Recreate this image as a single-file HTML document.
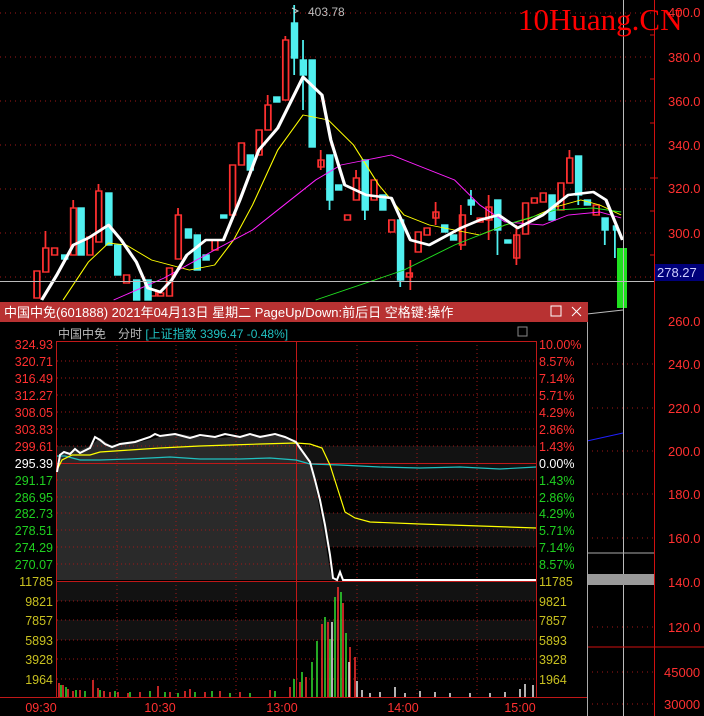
<!DOCTYPE html><html><head><meta charset="utf-8"><style>
body{margin:0;background:#000;width:704px;height:716px;overflow:hidden;font-family:"Liberation Sans","Noto Sans CJK SC",sans-serif}
svg{position:absolute;left:0;top:0}
</style></head><body>
<svg width="704" height="716" xmlns="http://www.w3.org/2000/svg" font-family="Liberation Sans, Noto Sans CJK SC, sans-serif">
<g stroke="#a01818" stroke-dasharray="1 4" stroke-width="1">
<line x1="0" y1="13" x2="654" y2="13"/><line x1="0" y1="57" x2="654" y2="57"/><line x1="0" y1="101" x2="654" y2="101"/><line x1="0" y1="145" x2="654" y2="145"/><line x1="0" y1="189" x2="654" y2="189"/><line x1="0" y1="233" x2="654" y2="233"/><line x1="0" y1="277" x2="654" y2="277"/>
<line x1="587" y1="364" x2="654" y2="364"/><line x1="587" y1="408" x2="654" y2="408"/><line x1="587" y1="451" x2="654" y2="451"/><line x1="587" y1="494" x2="654" y2="494"/><line x1="587" y1="538" x2="654" y2="538"/><line x1="587" y1="627" x2="654" y2="627"/><line x1="587" y1="672" x2="654" y2="672"/><line x1="587" y1="704" x2="654" y2="704"/>
</g>
<line x1="654.5" y1="0" x2="654.5" y2="716" stroke="#d01010"/>
<g stroke="#d01010"><line x1="650" y1="35" x2="654" y2="35"/><line x1="650" y1="79" x2="654" y2="79"/><line x1="650" y1="123" x2="654" y2="123"/><line x1="650" y1="178" x2="658" y2="178"/><line x1="650" y1="211" x2="654" y2="211"/><line x1="650" y1="255" x2="654" y2="255"/></g>
<g transform="scale(1.2626,1)">
<g fill="#ff3030" stroke="#ff3030" stroke-width="1.4">
<rect x="27" y="271" width="4.5" height="27" fill="#000"/><rect x="34" y="248" width="4.5" height="24" fill="#000"/><rect x="41" y="248" width="4.5" height="7" fill="#000"/><rect x="56" y="208" width="4.5" height="47" fill="#000"/><rect x="69" y="237" width="4.5" height="18" fill="#000"/><rect x="76" y="191" width="4.5" height="51" fill="#000"/><rect x="98" y="275" width="4.5" height="8" fill="#000"/><rect x="119" y="290" width="4.5" height="6" fill="#000"/><rect x="125" y="293" width="4.5" height="3" fill="#000"/><rect x="132" y="268" width="4.5" height="28" fill="#000"/><rect x="139" y="215" width="4.5" height="44" fill="#000"/><rect x="168" y="240" width="4.5" height="10" fill="#000"/><rect x="182" y="165" width="4.5" height="50" fill="#000"/><rect x="189" y="143" width="4.5" height="22" fill="#000"/><rect x="203" y="130" width="4.5" height="25" fill="#000"/><rect x="210" y="105" width="4.5" height="25" fill="#000"/><rect x="224" y="40" width="4.5" height="60" fill="#000"/><rect x="252" y="160" width="4.5" height="7" fill="#000"/><rect x="273" y="215" width="4.5" height="5" fill="#000"/><rect x="280" y="178" width="4.5" height="22" fill="#000"/><rect x="294" y="180" width="4.5" height="20" fill="#000"/><rect x="308" y="220" width="4.5" height="12" fill="#000"/><rect x="322" y="273" width="4.5" height="4" fill="#000"/><rect x="329" y="232" width="4.5" height="20" fill="#000"/><rect x="336" y="228" width="4.5" height="7" fill="#000"/><rect x="343" y="212" width="4.5" height="6" fill="#000"/><rect x="364" y="215" width="4.5" height="30" fill="#000"/><rect x="378" y="218" width="4.5" height="4" fill="#000"/><rect x="385" y="207" width="4.5" height="13" fill="#000"/><rect x="407" y="235" width="4.5" height="23" fill="#000"/><rect x="414" y="203" width="4.5" height="31" fill="#000"/><rect x="421" y="198" width="4.5" height="5" fill="#000"/><rect x="428" y="193" width="4.5" height="9" fill="#000"/><rect x="442" y="183" width="4.5" height="27" fill="#000"/><rect x="449" y="158" width="4.5" height="25" fill="#000"/><rect x="470" y="205" width="4.5" height="10" fill="#000"/>
<path d="M36 231V248M58 200V208M78 184V191M141 208V215M212 95V105M226 36V40M254 150V170M282 170V178M345 202V225M365 205V250M387 195V240M409 225V265M451 150V158M325 260V290" fill="none"/>
</g>
<g fill="#50f0f0" stroke="#50f0f0" stroke-width="1.4">
<rect x="49" y="255" width="4.5" height="4"/><rect x="62" y="208" width="4.5" height="47"/><rect x="84" y="193" width="4.5" height="52"/><rect x="91" y="245" width="4.5" height="30"/><rect x="106" y="280" width="4.5" height="20"/><rect x="115" y="280" width="4.5" height="20"/><rect x="147" y="229" width="4.5" height="9"/><rect x="154" y="235" width="4.5" height="35"/><rect x="161" y="255" width="4.5" height="5"/><rect x="175" y="215" width="4.5" height="3"/><rect x="196" y="155" width="4.5" height="15"/><rect x="217" y="97" width="4.5" height="5"/><rect x="231" y="23" width="4.5" height="35"/><rect x="238" y="60" width="4.5" height="15"/><rect x="245" y="60" width="4.5" height="87"/><rect x="259" y="155" width="4.5" height="45"/><rect x="266" y="185" width="4.5" height="5"/><rect x="287" y="160" width="4.5" height="50"/><rect x="301" y="195" width="4.5" height="15"/><rect x="315" y="220" width="4.5" height="60"/><rect x="350" y="225" width="4.5" height="7"/><rect x="357" y="235" width="4.5" height="5"/><rect x="371" y="200" width="4.5" height="5"/><rect x="392" y="200" width="4.5" height="30"/><rect x="400" y="240" width="4.5" height="3"/><rect x="435" y="195" width="4.5" height="25"/><rect x="456" y="156" width="4.5" height="39"/><rect x="463" y="200" width="4.5" height="5"/><rect x="477" y="218" width="4.5" height="12"/><rect x="486" y="226" width="3" height="4"/>
<path d="M233 5V23M233 58V75M240 40V110M317 280V287M261 200V210M289 210V220M394 230V255M458 195V205M479 230V245M487 230V258M373 190V215" fill="none"/>
</g>
<polyline fill="none" stroke="#ffff00" stroke-width="0.9" points="50,300 70,262 86,243 100,245 120,260 150,270 170,265 185,240 200,205 220,150 240,115 260,120 280,145 300,185 320,215 340,225 380,235 400,225 420,218 440,207 460,200 475,205 492,215"/>
<polyline fill="none" stroke="#ff20ff" stroke-width="0.9" points="90,300 130,278 170,250 200,230 220,210 250,180 270,165 290,160 310,155 330,165 360,180 380,205 400,222 430,225 450,215 475,212 492,218"/>
<polyline fill="none" stroke="#20e020" stroke-width="0.9" points="250,300 320,270 360,245 400,225 440,210 470,208 492,212"/>
<polyline fill="none" stroke="#fff" stroke-width="2.6" stroke-linejoin="round" points="33,300 45,275 58,245 70,238 86,225 96,240 108,262 117,288 127,292 136,280 148,255 163,240 177,240 190,200 205,150 220,128 240,77 255,95 262,140 273,185 290,195 310,198 325,240 340,245 365,228 380,220 395,215 410,228 430,215 450,195 470,192 480,200 493,240"/>
</g>
<rect x="617" y="248" width="10" height="60" fill="#20e020"/>
<text x="308" y="16" fill="#bbb" font-size="12">403.78</text>
<path d="M292 8l6 3-4 2" stroke="#ccc" fill="none"/>
<line x1="0" y1="281.5" x2="654" y2="281.5" stroke="#bbb"/>
<line x1="623.5" y1="0" x2="623.5" y2="716" stroke="#bbb"/>
<text x="518" y="30" fill="#ff0000" font-size="31" font-family="Liberation Serif, serif">10Huang.CN</text>
<g fill="#ff3030" font-size="13">
<text x="668" y="17">400.0</text><text x="668" y="62">380.0</text><text x="668" y="106">360.0</text><text x="668" y="150">340.0</text><text x="668" y="193">320.0</text><text x="668" y="238">300.0</text><text x="668" y="326">260.0</text><text x="668" y="369">240.0</text><text x="668" y="413">220.0</text><text x="668" y="456">200.0</text><text x="668" y="499">180.0</text><text x="668" y="543">160.0</text><text x="668" y="587">140.0</text><text x="668" y="632">120.0</text><text x="664" y="677">45000</text><text x="664" y="709">30000</text>
</g>
<rect x="655" y="264" width="49" height="17" fill="#00007a"/>
<text x="657" y="277" fill="#cfcfff" font-size="13">278.27</text>
<line x1="587" y1="553" x2="654" y2="553" stroke="#aaa"/>
<rect x="587" y="574" width="67" height="11" fill="#999"/>
<line x1="587" y1="647" x2="704" y2="647" stroke="#d01010"/>
<line x1="587" y1="314" x2="623" y2="310" stroke="#bbb"/>
<line x1="587" y1="441" x2="623" y2="433" stroke="#2020ff"/>
<rect x="0" y="302" width="587" height="414" fill="#000"/>
<line x1="587.5" y1="302" x2="587.5" y2="716" stroke="#aaa"/>
<rect x="0" y="302" width="588" height="20" fill="#b83232"/>
<text x="4" y="317" fill="#fff" font-size="13">中国中免(601888) 2021年04月13日 星期二 PageUp/Down:前后日 空格键:操作</text>
<rect x="551" y="306" width="10" height="10" fill="none" stroke="#fff"/>
<path d="M572 307l9 9M581 307l-9 9" stroke="#fff"/>
<text x="58" y="338" fill="#bbb" font-size="12">中国中免　分时 <tspan fill="#20c0c0">[上证指数 3396.47 -0.48%]</tspan></text>
<rect x="518" y="327" width="9" height="9" fill="none" stroke="#888"/>
<rect x="57" y="341" width="479" height="356" fill="#000"/>
<g fill="#121212"><rect x="57" y="446" width="479" height="34"/><rect x="57" y="513" width="479" height="34"/><rect x="57" y="581" width="479" height="20"/><rect x="57" y="620" width="479" height="20"/></g>
<polygon fill="#2a2a2a" points="57,470 60,455 70,452 80,450 90,446 100,438 110,445 120,444 140,442 160,437 180,434 200,437 220,438 240,436 260,435 280,436 296,440 300,445 312,470 318,500 325,540 330,570 333,580 57,580"/>
<g stroke="#a01818" stroke-dasharray="1 3">
<line x1="57" y1="361" x2="536" y2="361"/><line x1="57" y1="378" x2="536" y2="378"/><line x1="57" y1="395" x2="536" y2="395"/><line x1="57" y1="412" x2="536" y2="412"/><line x1="57" y1="429" x2="536" y2="429"/><line x1="57" y1="446" x2="536" y2="446"/><line x1="57" y1="480" x2="536" y2="480"/><line x1="57" y1="497" x2="536" y2="497"/><line x1="57" y1="513" x2="536" y2="513"/><line x1="57" y1="530" x2="536" y2="530"/><line x1="57" y1="547" x2="536" y2="547"/><line x1="57" y1="564" x2="536" y2="564"/><line x1="57" y1="601" x2="536" y2="601"/><line x1="57" y1="620" x2="536" y2="620"/><line x1="57" y1="640" x2="536" y2="640"/><line x1="57" y1="659" x2="536" y2="659"/><line x1="57" y1="679" x2="536" y2="679"/>
<line x1="117" y1="341" x2="117" y2="697"/><line x1="176" y1="341" x2="176" y2="697"/><line x1="236" y1="341" x2="236" y2="697"/><line x1="357" y1="341" x2="357" y2="697"/><line x1="417" y1="341" x2="417" y2="697"/><line x1="477" y1="341" x2="477" y2="697"/>
</g>
<rect x="56.5" y="341.5" width="480" height="356" fill="none" stroke="#c01818"/>
<line x1="57" y1="463.5" x2="536" y2="463.5" stroke="#c01818"/>
<line x1="57" y1="581.5" x2="536" y2="581.5" stroke="#c01818"/>
<line x1="296.5" y1="341" x2="296.5" y2="697" stroke="#c01818"/>
<line x1="0" y1="697.5" x2="587" y2="697.5" stroke="#c01818"/>
<polyline fill="none" stroke="#20c0c0" stroke-width="1.2" points="57,456 65,456 80,460 100,460 130,459 170,457 200,459 240,459 270,458 296,460 310,464 340,465 380,467 420,468 460,467 500,469 536,467"/>
<polyline fill="none" stroke="#ffff00" stroke-width="1.2" points="57,470 62,460 72,455 90,455 100,452 130,450 160,448 200,446 230,445 260,444 296,443 310,444 322,448 330,465 338,490 345,512 355,518 370,522 420,524 480,526 536,528"/>
<polyline fill="none" stroke="#fff" stroke-width="2" points="57,472 60,455 64,452 70,454 75,449 80,453 90,448 95,437 100,440 105,444 112,447 120,444 135,442 150,437 155,434 160,436 175,434 190,438 200,435 215,437 225,434 240,437 250,434 260,437 275,434 285,437 296,442 300,448 310,462 315,480 320,500 325,525 330,555 333,578 337,580 340,572 343,580 536,580"/>
<g stroke-width="1.5">
<path stroke="#ff3030" d="M59 697v-14M63 697v-12M68 697v-8M73 697v-6M80 697v-7M93 697v-17M98 697v-9M104 697v-6M110 697v-5M118 697v-5M128 697v-4M140 697v-5M158 697v-11M170 697v-5M185 697v-6M190 697v-8M205 697v-5M220 697v-6M240 697v-5M270 697v-7M290 697v-10M300 697v-15M306 697v-20M322 697v-73M328 697v-75M338 697v-110M343 697v-94M350 697v-50M355 697v-40"/>
<path stroke="#30e030" d="M61 697v-12M66 697v-10M76 697v-7M85 697v-6M100 697v-7M115 697v-6M130 697v-5M150 697v-6M165 697v-5M178 697v-4M195 697v-5M212 697v-6M230 697v-4M250 697v-4M275 697v-6M294 697v-18M302 697v-25M312 697v-35M317 697v-56M325 697v-80M330 697v-58M335 697v-100M341 697v-105M346 697v-64"/>
<path stroke="#eee" d="M332 697v-75M349 697v-35M357 697v-16M362 697v-7M370 697v-4M380 697v-5M395 697v-10M405 697v-4M420 697v-6M435 697v-5M450 697v-4M470 697v-4M490 697v-4M505 697v-5M520 697v-8M525 697v-13M533 697v-12"/>
</g>
<g font-size="12.5" text-anchor="end">
<text x="53" y="349" fill="#ff3030">324.93</text><text x="53" y="366" fill="#ff3030">320.71</text><text x="53" y="383" fill="#ff3030">316.49</text><text x="53" y="400" fill="#ff3030">312.27</text><text x="53" y="417" fill="#ff3030">308.05</text><text x="53" y="434" fill="#ff3030">303.83</text><text x="53" y="451" fill="#ff3030">299.61</text><text x="53" y="468" fill="#fff">295.39</text><text x="53" y="485" fill="#20d020">291.17</text><text x="53" y="502" fill="#20d020">286.95</text><text x="53" y="518" fill="#20d020">282.73</text><text x="53" y="535" fill="#20d020">278.51</text><text x="53" y="552" fill="#20d020">274.29</text><text x="53" y="569" fill="#20d020">270.07</text>
<text x="53" y="586" fill="#c8c020">11785</text><text x="53" y="606" fill="#c8c020">9821</text><text x="53" y="625" fill="#c8c020">7857</text><text x="53" y="645" fill="#c8c020">5893</text><text x="53" y="664" fill="#c8c020">3928</text><text x="53" y="684" fill="#c8c020">1964</text>
</g>
<g font-size="12.5">
<text x="539" y="349" fill="#ff3030">10.00%</text><text x="539" y="366" fill="#ff3030">8.57%</text><text x="539" y="383" fill="#ff3030">7.14%</text><text x="539" y="400" fill="#ff3030">5.71%</text><text x="539" y="417" fill="#ff3030">4.29%</text><text x="539" y="434" fill="#ff3030">2.86%</text><text x="539" y="451" fill="#ff3030">1.43%</text><text x="539" y="468" fill="#fff">0.00%</text><text x="539" y="485" fill="#20d020">1.43%</text><text x="539" y="502" fill="#20d020">2.86%</text><text x="539" y="518" fill="#20d020">4.29%</text><text x="539" y="535" fill="#20d020">5.71%</text><text x="539" y="552" fill="#20d020">7.14%</text><text x="539" y="569" fill="#20d020">8.57%</text>
<text x="539" y="586" fill="#c8c020">11785</text><text x="539" y="606" fill="#c8c020">9821</text><text x="539" y="625" fill="#c8c020">7857</text><text x="539" y="645" fill="#c8c020">5893</text><text x="539" y="664" fill="#c8c020">3928</text><text x="539" y="684" fill="#c8c020">1964</text>
</g>
<g font-size="12.5" fill="#ff3030" text-anchor="middle">
<text x="41" y="712">09:30</text><text x="160" y="712">10:30</text><text x="282" y="712">13:00</text><text x="403" y="712">14:00</text><text x="520" y="712">15:00</text>
</g>
</svg>
</body></html>
